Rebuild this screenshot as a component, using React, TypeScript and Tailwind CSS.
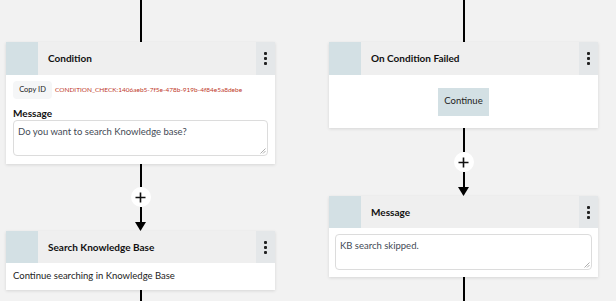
import type { ReactNode } from "react";

const font = { fontFamily: 'Lato, "Open Sans", sans-serif' };

function Line({ h }: { h: string }) {
  return <div className={`w-[2px] shrink-0 bg-black ${h}`} />;
}

function PlusButton() {
  return (
    <div className="flex h-[20px] w-[20px] shrink-0 items-center justify-center rounded-full bg-white">
      <svg width="11" height="11" viewBox="0 0 11 11">
        <path d="M5.5 0.5v10M0.5 5.5h10" stroke="#111" strokeWidth="1.6" />
      </svg>
    </div>
  );
}

function Arrow() {
  return (
    <svg width="11" height="9" viewBox="0 0 11 9" className="block shrink-0">
      <path d="M0 0h11L5.5 9z" fill="#000" />
    </svg>
  );
}

function Kebab() {
  return (
    <div className="flex w-[19px] flex-col items-center justify-center gap-[2px] bg-[#e4e7e9]">
      <span className="h-[3px] w-[3px] rounded-[1px] bg-[#222]" />
      <span className="h-[3px] w-[3px] rounded-[1px] bg-[#222]" />
      <span className="h-[3px] w-[3px] rounded-[1px] bg-[#222]" />
    </div>
  );
}

function Card({
  title,
  headerH,
  children,
}: {
  title: string;
  headerH: string;
  children: ReactNode;
}) {
  return (
    <div className="w-[269px] shrink-0 bg-white shadow-[0_1px_3px_rgba(0,0,0,0.12)]">
      <div className={`flex bg-[#efefef] ${headerH}`}>
        <div className="w-[32px] bg-[#d3e0e4]" />
        <div className="flex flex-1 items-center pl-[10px] text-[10px] font-bold text-[#111]">
          {title}
        </div>
        <Kebab />
      </div>
      {children}
    </div>
  );
}

function TextBox({ text, h }: { text: string; h: string }) {
  return (
    <div
      className={`relative rounded-[4px] border border-[#dcdcdc] px-[4px] pt-[4px] text-[9.5px] leading-[13px] text-[#444a55] ${h}`}
    >
      {text}
      <svg width="6" height="6" viewBox="0 0 6 6" className="absolute bottom-[1px] right-[1px]">
        <path d="M5.5 0.5L0.5 5.5M5.5 3L3 5.5" stroke="#999" strokeWidth="0.8" />
      </svg>
    </div>
  );
}

export default function App() {
  return (
    <div
      className="flex h-[301px] w-[616px] items-start gap-[54px] overflow-hidden bg-[#f2f2f2] pl-[6px]"
      style={font}
    >
      {/* left branch */}
      <div className="flex w-[269px] shrink-0 flex-col items-center">
        <Line h="h-[42px]" />
        <Card title="Condition" headerH="h-[33px]">
          <div className="px-[7px] pb-[8px] pt-[6px]">
            <div className="flex items-center">
              <span className="flex h-[18px] w-[39px] items-center justify-center rounded-[4px] bg-[#f5f6f7] text-[7.5px] text-[#222]">
                Copy ID
              </span>
              <span className="ml-[3px] whitespace-nowrap text-[6.5px] text-[#c0392b]">
                CONDITION_CHECK:1406aeb5-7f5e-478b-919b-4f84e5a8debe
              </span>
            </div>
            <div className="mt-[7px] text-[10px] font-bold leading-[14px] text-[#111]">Message</div>
            <TextBox text="Do you want to search Knowledge base?" h="h-[36px]" />
          </div>
        </Card>
        <Line h="h-[23px]" />
        <PlusButton />
        <Line h="h-[15px]" />
        <Arrow />
        <Card title="Search Knowledge Base" headerH="h-[32px]">
          <div className="flex h-[27px] items-center px-[7px] text-[9.5px] text-[#222]">
            Continue searching in Knowledge Base
          </div>
        </Card>
        <Line h="h-[20px]" />
      </div>

      {/* right branch */}
      <div className="flex w-[269px] shrink-0 flex-col items-center">
        <Line h="h-[42px]" />
        <Card title="On Condition Failed" headerH="h-[33px]">
          <div className="flex h-[53px] items-center justify-center">
            <span className="flex h-[28px] w-[51px] items-center justify-center bg-[#d3e0e4] text-[9.5px] text-[#222]">
              Continue
            </span>
          </div>
        </Card>
        <Line h="h-[24px]" />
        <PlusButton />
        <Line h="h-[15px]" />
        <Arrow />
        <Card title="Message" headerH="h-[32px]">
          <div className="px-[6px] pb-[7px] pt-[6px]">
            <TextBox text="KB search skipped." h="h-[36px]" />
          </div>
        </Card>
        <Line h="h-[30px]" />
      </div>
    </div>
  );
}
